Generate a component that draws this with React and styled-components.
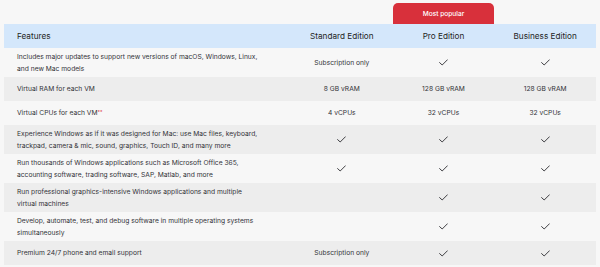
import React from 'react'
import styled, { createGlobalStyle } from 'styled-components'

const GlobalStyle = createGlobalStyle`
  html, body {
    margin: 0;
    padding: 0;
    background: #f7f7f7;
  }
`

const Page = styled.div`
  width: 600px;
  height: 267px;
  box-sizing: border-box;
  padding: 3px 4px 0;
  font-family: Inter, 'Liberation Sans', sans-serif;
  color: #2f2f33;
  overflow: hidden;
`

const Grid = styled.div`
  display: grid;
  grid-template-columns: 287px repeat(3, 1fr);
  align-items: stretch;
  background: ${props => props.bg || 'transparent'};
`

const TabSlot = styled.div`
  grid-column: ${props => props.col};
  height: 21px;
  display: flex;
  align-items: center;
  justify-content: center;
  background: #d8303b;
  border-radius: 5px 5px 0 0;
  color: #fff;
  font-size: 6.6px;
  font-weight: 500;
`

const HeadCell = styled.div`
  height: 24px;
  display: flex;
  align-items: center;
  justify-content: ${props => props.first ? 'flex-start' : 'center'};
  padding-left: ${props => props.first ? '13px' : '0'};
  font-size: 8.2px;
  color: #1f1f24;
`

const Cell = styled.div`
  min-height: 24px;
  box-sizing: border-box;
  padding: 2.5px 0;
  display: flex;
  align-items: center;
  justify-content: ${props => props.first ? 'flex-start' : 'center'};
  padding-left: ${props => props.first ? '13px' : '0'};
  padding-right: ${props => props.first ? '30px' : '0'};
  font-size: 6.7px;
  line-height: 12px;
  color: #333338;
`

const Stars = styled.sup`
  color: #e0414b;
  font-size: 5px;
  line-height: 0;
  vertical-align: 1px;
`

const Check = () => (
  <svg width="9" height="7" viewBox="0 0 9 7">
    <polyline points="0.6,3.6 3.2,6 8.4,0.8" fill="none" stroke="#2b2b30" strokeWidth="0.9" strokeLinecap="round" strokeLinejoin="round" />
  </svg>
)

const rows = [
  ['Includes major updates to support new versions of macOS, Windows, Linux, and new Mac models', 'Subscription only', true, true],
  ['Virtual RAM for each VM', '8 GB vRAM', '128 GB vRAM', '128 GB vRAM'],
  ['Virtual CPUs for each VM', '4 vCPUs', '32 vCPUs', '32 vCPUs'],
  ['Experience Windows as if it was designed for Mac: use Mac files, keyboard, trackpad, camera & mic, sound, graphics, Touch ID, and many more', true, true, true],
  ['Run thousands of Windows applications such as Microsoft Office 365, accounting software, trading software, SAP, Matlab, and more', true, true, true],
  ['Run professional graphics-intensive Windows applications and multiple virtual machines', null, true, true],
  ['Develop, automate, test, and debug software in multiple operating systems simultaneously', null, true, true],
  ['Premium 24/7 phone and email support', 'Subscription only', true, true]
]

const renderValue = v => {
  if (v === true) return <Check />
  if (!v) return null
  return v
}

export default function App () {
  return (
    <Page>
      <GlobalStyle />
      <Grid>
        <TabSlot col={3}>Most popular</TabSlot>
      </Grid>
      <Grid bg="#d4e7fb">
        <HeadCell first>Features</HeadCell>
        <HeadCell>Standard Edition</HeadCell>
        <HeadCell>Pro Edition</HeadCell>
        <HeadCell>Business Edition</HeadCell>
      </Grid>
      {rows.map((r, i) => (
        <Grid key={i} bg={i % 2 === 1 ? '#ededed' : 'transparent'}>
          <Cell first>
            <span>
              {r[0]}
              {i === 2 && <Stars>**</Stars>}
            </span>
          </Cell>
          <Cell>{renderValue(r[1])}</Cell>
          <Cell>{renderValue(r[2])}</Cell>
          <Cell>{renderValue(r[3])}</Cell>
        </Grid>
      ))}
    </Page>
  )
}
